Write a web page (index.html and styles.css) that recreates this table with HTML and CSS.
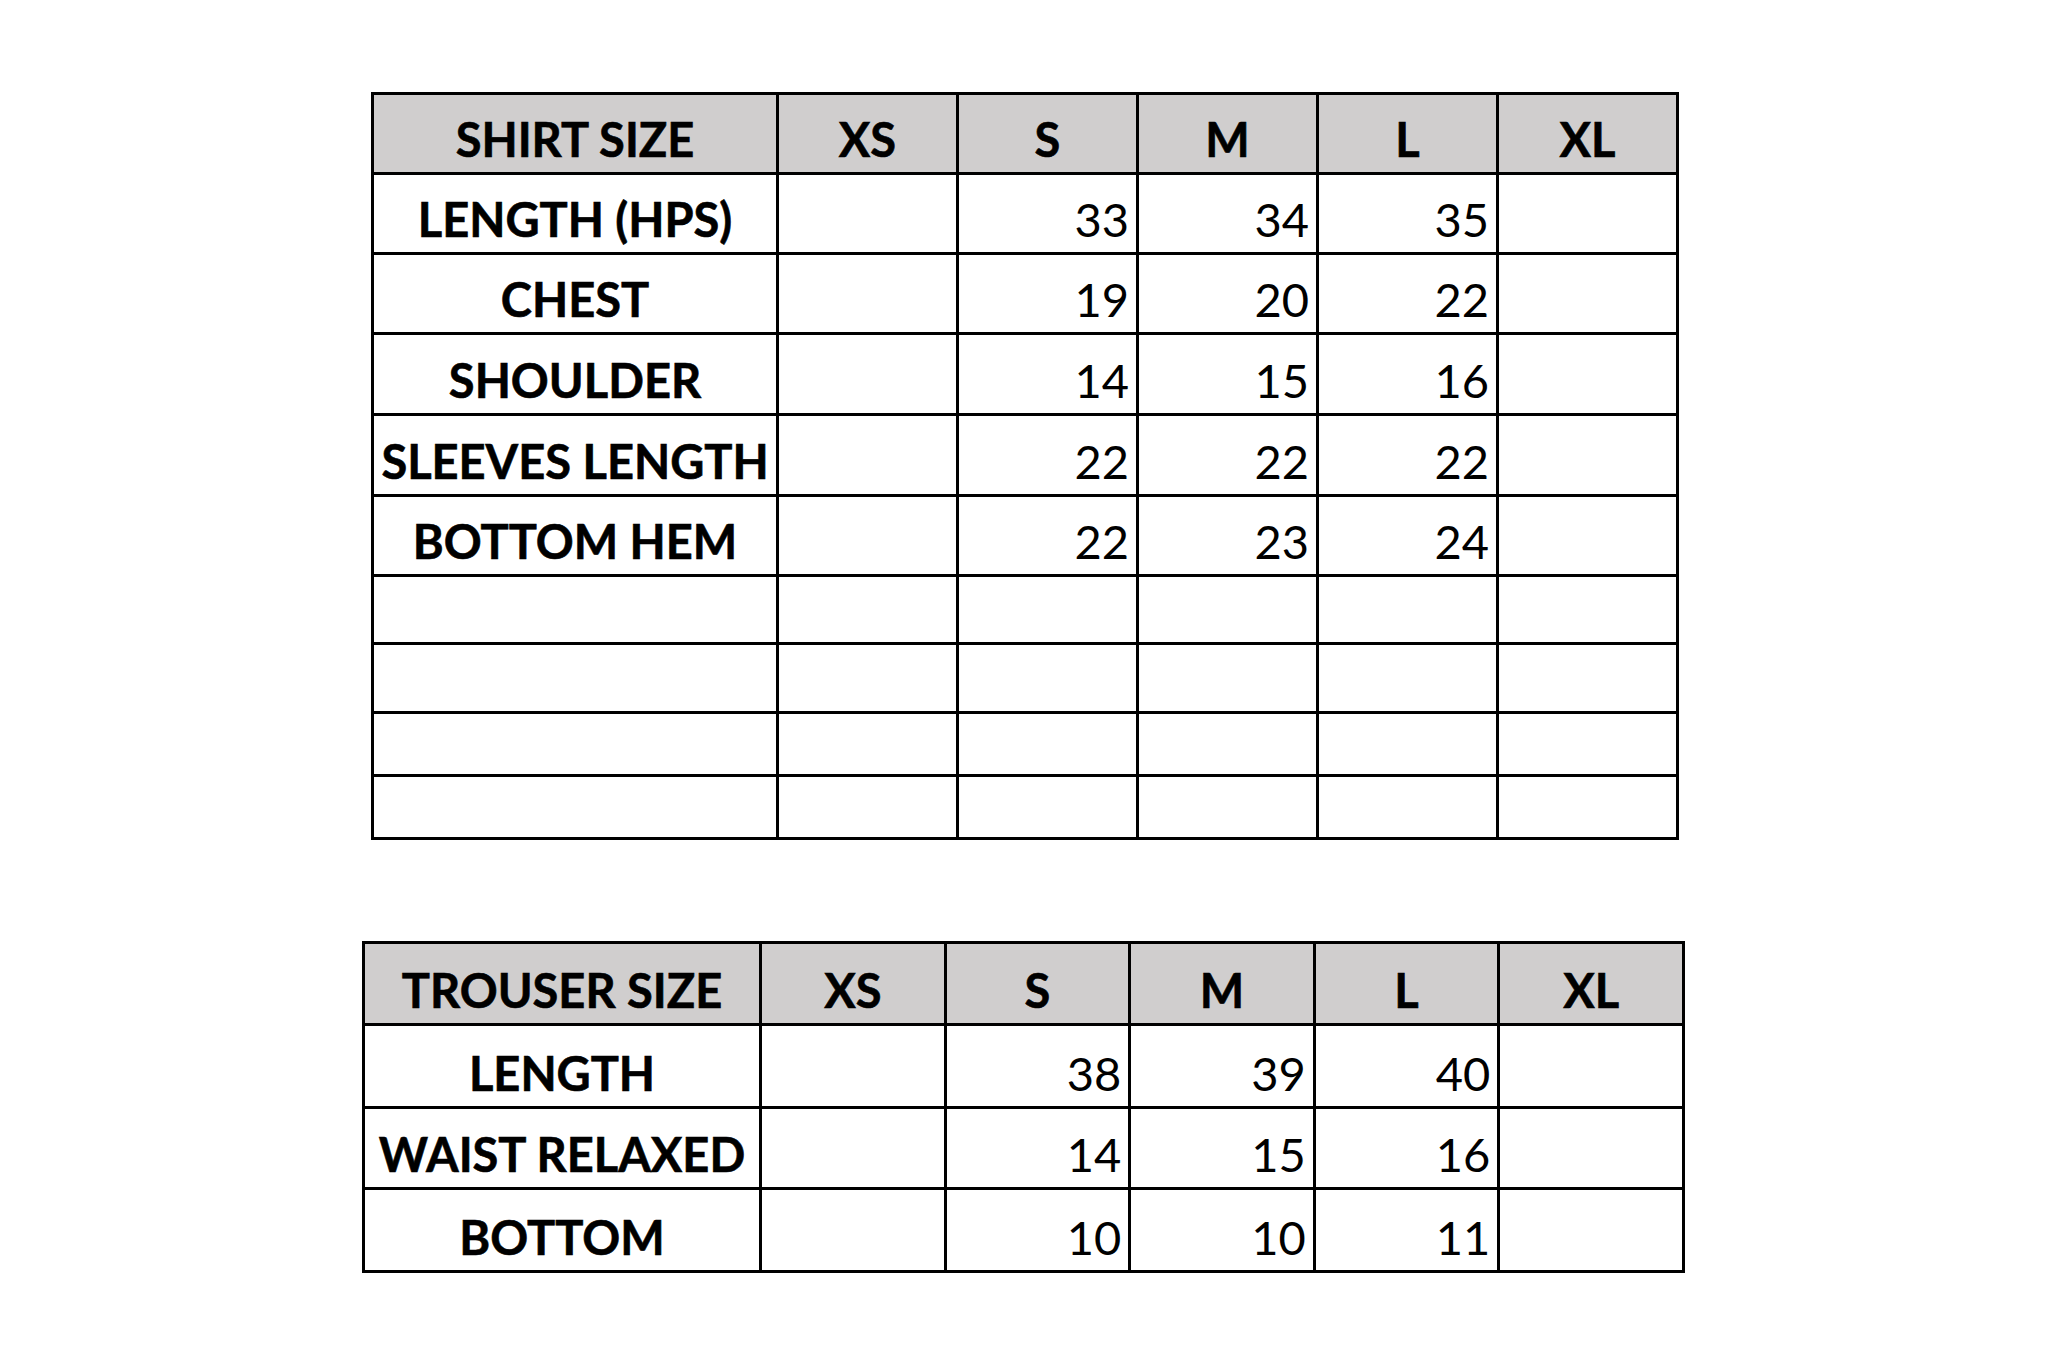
FILE: index.html
```html
<!DOCTYPE html>
<html lang="en">
<head>
<meta charset="utf-8">
<title>Size Chart</title>
<link rel="stylesheet" href="styles.css">
</head>
<body>
<main class="page">
  <table class="chart shirt">
    <colgroup>
      <col class="c-label"><col class="c-size"><col class="c-size"><col class="c-size"><col class="c-size"><col class="c-size">
    </colgroup>
    <thead>
      <tr class="r-head"><th>SHIRT SIZE</th><th>XS</th><th>S</th><th>M</th><th>L</th><th>XL</th></tr>
    </thead>
    <tbody>
      <tr class="r-a"><th>LENGTH (HPS)</th><td></td><td>33</td><td>34</td><td>35</td><td></td></tr>
      <tr class="r-a"><th>CHEST</th><td></td><td>19</td><td>20</td><td>22</td><td></td></tr>
      <tr class="r-b"><th>SHOULDER</th><td></td><td>14</td><td>15</td><td>16</td><td></td></tr>
      <tr class="r-b"><th>SLEEVES LENGTH</th><td></td><td>22</td><td>22</td><td>22</td><td></td></tr>
      <tr class="r-a"><th>BOTTOM HEM</th><td></td><td>22</td><td>23</td><td>24</td><td></td></tr>
      <tr class="r-e1"><th></th><td></td><td></td><td></td><td></td><td></td></tr>
      <tr class="r-e2"><th></th><td></td><td></td><td></td><td></td><td></td></tr>
      <tr class="r-e3"><th></th><td></td><td></td><td></td><td></td><td></td></tr>
      <tr class="r-e3"><th></th><td></td><td></td><td></td><td></td><td></td></tr>
    </tbody>
  </table>

  <table class="chart trouser">
    <colgroup>
      <col class="c-label"><col class="c-size"><col class="c-size"><col class="c-size"><col class="c-size"><col class="c-size">
    </colgroup>
    <thead>
      <tr class="r-head"><th>TROUSER SIZE</th><th>XS</th><th>S</th><th>M</th><th>L</th><th>XL</th></tr>
    </thead>
    <tbody>
      <tr class="r-t"><th>LENGTH</th><td></td><td>38</td><td>39</td><td>40</td><td></td></tr>
      <tr class="r-t2"><th>WAIST RELAXED</th><td></td><td>14</td><td>15</td><td>16</td><td></td></tr>
      <tr class="r-t"><th>BOTTOM</th><td></td><td>10</td><td>10</td><td>11</td><td></td></tr>
    </tbody>
  </table>
</main>
</body>
</html>
```

FILE: styles.css
```css
html, body {
  margin: 0;
  padding: 0;
  background: #ffffff;
}

.page {
  display: flex;
  flex-direction: column;
  align-items: flex-start;
  padding-top: 92px;
}

.chart {
  border-collapse: collapse;
  table-layout: fixed;
  font-family: Lato, "Open Sans", "Liberation Sans", sans-serif;
  font-size: 47px;
  line-height: 1;
  color: #000000;
}

.chart th,
.chart td {
  border: 3px solid #000000;
  padding: 0 7px 9px 7px;
  vertical-align: bottom;
  white-space: nowrap;
  overflow: visible;
}

.chart th {
  font-weight: 700;
  text-align: center;
  padding-left: 0;
  padding-right: 0;
  -webkit-text-stroke: 0.6px #000000;
}

.chart td {
  font-weight: 400;
  text-align: right;
}

.chart thead th {
  background: #d0cece;
}

/* shirt table */
.shirt {
  margin-left: 371px;
  width: 1305px;
}
.shirt .c-label { width: 405px; }
.shirt .c-size { width: 180px; }

.shirt .r-head { height: 80px; }
.shirt .r-a { height: 80px; }
.shirt .r-b { height: 81px; }
.shirt .r-e1 { height: 68px; }
.shirt .r-e2 { height: 69px; }
.shirt .r-e3 { height: 63px; }

/* trouser table */
.trouser {
  margin-left: 362px;
  margin-top: 101px;
  width: 1320px;
}
.trouser .c-label { width: 397px; }
.trouser .c-size { width: 184.6px; }

.trouser .r-head { height: 82px; }
.trouser .r-t { height: 83px; }
.trouser .r-t2 { height: 81px; }
```
